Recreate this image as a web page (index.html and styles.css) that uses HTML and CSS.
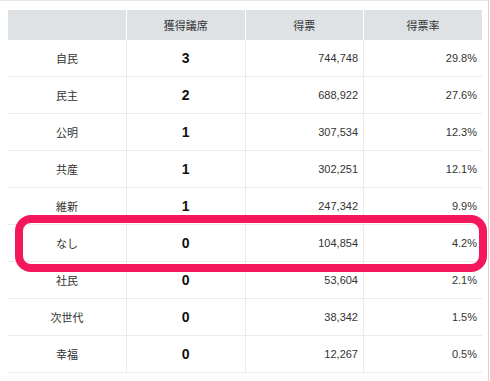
FILE: index.html
```html
<!DOCTYPE html>
<html lang="ja">
<head>
<meta charset="utf-8">
<link rel="stylesheet" href="styles.css">
</head>
<body>
<div class="frame">
  <table class="results">
    <thead>
      <tr><th></th><th>獲得議席</th><th>得票</th><th>得票率</th></tr>
    </thead>
    <tbody>
      <tr><td class="party">自民</td><td class="seats">3</td><td class="num">744,748</td><td class="num">29.8%</td></tr>
      <tr><td class="party">民主</td><td class="seats">2</td><td class="num">688,922</td><td class="num">27.6%</td></tr>
      <tr><td class="party">公明</td><td class="seats">1</td><td class="num">307,534</td><td class="num">12.3%</td></tr>
      <tr><td class="party">共産</td><td class="seats">1</td><td class="num">302,251</td><td class="num">12.1%</td></tr>
      <tr><td class="party">維新</td><td class="seats">1</td><td class="num">247,342</td><td class="num">9.9%</td></tr>
      <tr><td class="party">なし</td><td class="seats">0</td><td class="num">104,854</td><td class="num">4.2%</td></tr>
      <tr><td class="party">社民</td><td class="seats">0</td><td class="num">53,604</td><td class="num">2.1%</td></tr>
      <tr><td class="party">次世代</td><td class="seats">0</td><td class="num">38,342</td><td class="num">1.5%</td></tr>
      <tr><td class="party">幸福</td><td class="seats">0</td><td class="num">12,267</td><td class="num">0.5%</td></tr>
    </tbody>
  </table>
  <div class="highlight"></div>
</div>
</body>
</html>
```
FILE: styles.css
```css
html, body {
  margin: 0;
  padding: 0;
  background: #ffffff;
}
body {
  font-family: "Liberation Sans", "Noto Sans CJK JP", sans-serif;
  color: #333333;
}
.frame {
  position: relative;
  width: 489px;
  height: 381px;
  box-sizing: border-box;
  border-top: 1px solid #e6e6e6;
  border-right: 1px solid #d4d4d4;
  padding: 9px 0 0 8px;
}
.results {
  border-collapse: collapse;
  table-layout: fixed;
  width: 474px;
}
.results th {
  background: #dfe2e5;
  height: 30px;
  padding: 0;
  font-weight: normal;
  font-size: 11px;
  text-align: center;
  border-left: 1px solid #ffffff;
}
.results th:first-child {
  border-left: none;
}
.results td {
  height: 36px;
  padding: 0 5px;
  border-bottom: 1px solid #ebebeb;
  border-left: 1px solid #ebebeb;
  font-size: 11px;
}
.results td:first-child {
  border-left: none;
}
.party {
  text-align: center;
}
.results td.seats {
  text-align: center;
  font-weight: bold;
  font-size: 14px;
  color: #111111;
}
.num {
  text-align: right;
}
.highlight {
  position: absolute;
  left: 15px;
  top: 214px;
  width: 472px;
  height: 57px;
  box-sizing: border-box;
  border: 8px solid #f5175c;
  border-radius: 16px;
}
```
